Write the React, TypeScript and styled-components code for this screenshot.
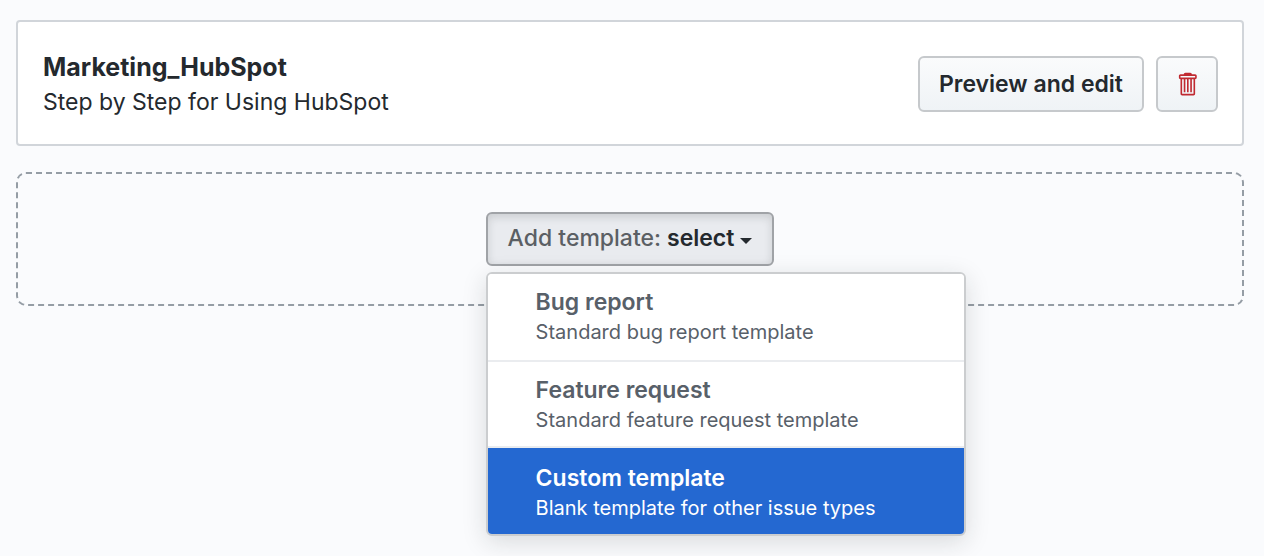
import React from "react";
import styled, { createGlobalStyle, css } from "styled-components";

const GlobalStyle = createGlobalStyle`
  *, *::before, *::after { box-sizing: border-box; }
  body {
    margin: 0;
    background: #fafbfd;
    color: #24292e;
    font-family: Inter, "Liberation Sans", sans-serif;
  }
`;

const Page = styled.main`
  display: flex;
  flex-direction: column;
  gap: 26px;
  min-height: 100vh;
  padding: 20px 20px 20px 16px;
`;

const TemplateCard = styled.section`
  display: flex;
  align-items: center;
  justify-content: space-between;
  gap: 24px;
  padding: 25px 24px 23px 25px;
  background: #fff;
  border: 2px solid #d1d5da;
  border-radius: 4px;
`;

const CardText = styled.div`
  padding-bottom: 4px;
`;

const CardTitle = styled.h2`
  margin: 0;
  font-size: 25px;
  line-height: 40px;
  font-weight: 700;
`;

const CardDescription = styled.p`
  margin: 0;
  font-size: 23px;
  line-height: 30px;
`;

const Actions = styled.div`
  display: flex;
  gap: 12px;
`;

const Button = styled.button<{ $active?: boolean }>`
  display: inline-flex;
  align-items: center;
  justify-content: center;
  height: 56px;
  padding: 0 19px;
  font: 600 23px/34px Inter, "Liberation Sans", sans-serif;
  color: #24292e;
  white-space: nowrap;
  background: linear-gradient(#fafbfc, #eff3f6);
  border: 2px solid #c6c9cc;
  border-radius: 6px;
  cursor: pointer;

  ${({ $active }) =>
    $active &&
    css`
      height: 54px;
      padding: 0 20px 2px;
      background: #e9ebef;
      border-color: #a0a3a7;
      box-shadow: inset 0 3px 8px rgba(27, 31, 35, 0.15);
    `}
`;

const TrashIcon = styled.svg`
  display: block;
  width: 20px;
  height: 26px;
  fill: #c02a31;
`;

const AddArea = styled.section`
  display: flex;
  justify-content: center;
  padding: 38px;
  border: 2px dashed #959da5;
  border-radius: 10px;
`;

const Dropdown = styled.div`
  position: relative;
`;

const ButtonLabel = styled.span`
  margin-right: 6px;
  font-weight: 500;
  color: #5b5f64;
`;

const Caret = styled.span`
  margin: 6px 0 0 6px;
  border: 6px solid transparent;
  border-top-color: currentColor;
  border-bottom: 0;
`;

const Menu = styled.div`
  position: absolute;
  top: calc(100% + 6px);
  left: 0;
  width: 480px;
  overflow: hidden;
  background: #fff;
  background-clip: padding-box;
  border: 2px solid #cbcdcf;
  border-radius: 6px;
  box-shadow: 0 6px 24px rgba(27, 31, 35, 0.15);
`;

const MenuItem = styled.button<{ $selected?: boolean }>`
  display: block;
  width: 100%;
  padding: 12px 48px 14px;
  font: 400 20px/28px Inter, "Liberation Sans", sans-serif;
  text-align: left;
  color: #586069;
  background: #fff;
  border: 0;
  cursor: pointer;

  & + & {
    border-top: 2px solid #eaecef;
  }

  ${({ $selected }) =>
    $selected &&
    css`
      padding-bottom: 12px;
      color: #fff;
      background: #2468d1;
      box-shadow: 0 -2px #eaecef;

      && {
        border-top-color: #2468d1;
      }
    `}
`;

const ItemTitle = styled.span`
  display: block;
  font-size: 23px;
  line-height: 32px;
  font-weight: 600;
`;

const ItemDescription = styled.span`
  display: block;
`;

const templates = [
  { title: "Bug report", description: "Standard bug report template" },
  { title: "Feature request", description: "Standard feature request template" },
  { title: "Custom template", description: "Blank template for other issue types" },
];

export default function App() {
  return (
    <>
      <GlobalStyle />
      <Page>
        <TemplateCard>
          <CardText>
            <CardTitle>Marketing_HubSpot</CardTitle>
            <CardDescription>Step by Step for Using HubSpot</CardDescription>
          </CardText>
          <Actions>
            <Button type="button">Preview and edit</Button>
            <Button type="button" aria-label="Delete template">
              <TrashIcon viewBox="0 0 12 16" aria-hidden="true">
                <path
                  fillRule="evenodd"
                  d="M11 2H9c0-.55-.45-1-1-1H5c-.55 0-1 .45-1 1H2c-.55 0-1 .45-1 1v1c0 .55.45 1 1 1v9c0 .55.45 1 1 1h7c.55 0 1-.45 1-1V5c.55 0 1-.45 1-1V3c0-.55-.45-1-1-1zm-1 12H3V5h1v8h1V5h1v8h1V5h1v8h1V5h1v9zm1-10H2V3h9v1z"
                />
              </TrashIcon>
            </Button>
          </Actions>
        </TemplateCard>
        <AddArea>
          <Dropdown>
            <Button type="button" $active aria-haspopup="menu" aria-expanded="true">
              <ButtonLabel>Add template:</ButtonLabel>
              select
              <Caret />
            </Button>
            <Menu role="menu">
              {templates.map(({ title, description }, index) => (
                <MenuItem key={title} type="button" role="menuitem" $selected={index === 2}>
                  <ItemTitle>{title}</ItemTitle>
                  <ItemDescription>{description}</ItemDescription>
                </MenuItem>
              ))}
            </Menu>
          </Dropdown>
        </AddArea>
      </Page>
    </>
  );
}
